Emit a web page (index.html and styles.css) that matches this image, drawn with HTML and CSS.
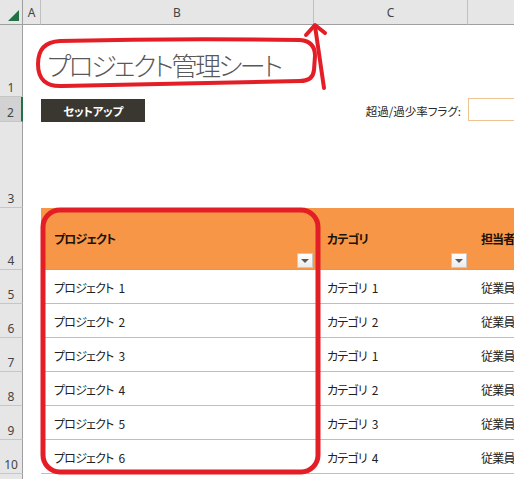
FILE: index.html
```html
<!DOCTYPE html>
<html lang="ja">
<head>
<meta charset="utf-8">
<link rel="stylesheet" href="styles.css">
</head>
<body>
<div class="page">
  <div class="sheet">
    <!-- column headers -->
    <div class="corner"><span class="tri"></span></div>
    <div class="ch">A</div>
    <div class="ch">B</div>
    <div class="ch">C</div>
    <div class="ch ch-last"></div>

    <!-- row 1 -->
    <div class="rh">1</div>
    <div class="c"></div>
    <div class="c title-cell"><span class="title">プロジェクト管理シート</span></div>
    <div class="c"></div>
    <div class="c"></div>

    <!-- row 2 -->
    <div class="rh rh-active">2</div>
    <div class="c"></div>
    <div class="c btn-cell"><span class="btn">セットアップ</span></div>
    <div class="c label-cell">超過/過少率フラグ:</div>
    <div class="c input-cell"><span class="input"></span></div>

    <!-- row 3 -->
    <div class="rh">3</div>
    <div class="c"></div>
    <div class="c"></div>
    <div class="c"></div>
    <div class="c"></div>

    <!-- row 4 header -->
    <div class="rh">4</div>
    <div class="c"></div>
    <div class="c th"><span class="th-text">プロジェクト</span><span class="dd"></span></div>
    <div class="c th"><span class="th-text">カテゴリ</span><span class="dd"></span></div>
    <div class="c th"><span class="th-text">担当者</span></div>

    <div class="rh">5</div><div class="c"></div>
    <div class="c td">プロジェクト 1</div><div class="c td">カテゴリ 1</div><div class="c td">従業員</div>
    <div class="rh">6</div><div class="c"></div>
    <div class="c td">プロジェクト 2</div><div class="c td">カテゴリ 2</div><div class="c td">従業員</div>
    <div class="rh">7</div><div class="c"></div>
    <div class="c td">プロジェクト 3</div><div class="c td">カテゴリ 1</div><div class="c td">従業員</div>
    <div class="rh">8</div><div class="c"></div>
    <div class="c td">プロジェクト 4</div><div class="c td">カテゴリ 2</div><div class="c td">従業員</div>
    <div class="rh">9</div><div class="c"></div>
    <div class="c td">プロジェクト 5</div><div class="c td">カテゴリ 3</div><div class="c td">従業員</div>
    <div class="rh">10</div><div class="c"></div>
    <div class="c td">プロジェクト 6</div><div class="c td">カテゴリ 4</div><div class="c td">従業員</div>

    <div class="rh"></div><div class="c"></div><div class="c"></div><div class="c"></div><div class="c"></div>
  </div>

  <svg class="marks" width="514" height="479" viewBox="0 0 514 479" xmlns="http://www.w3.org/2000/svg">
    <path d="M 60 41 Q 180 38 300 40 Q 315 41 315 56 L 314 70 Q 313 81 300 81 Q 180 84 62 86 Q 38 87 38 64 Q 38 42 60 41 Z" fill="none" stroke="#e41e26" stroke-width="4" stroke-linejoin="round"/>
    <path d="M 324 88 L 315 26" fill="none" stroke="#e41e26" stroke-width="4" stroke-linecap="round"/>
    <path d="M 306 35 L 315 25 L 325 33" fill="none" stroke="#e41e26" stroke-width="4" stroke-linecap="round" stroke-linejoin="round"/>
    <rect x="43" y="210" width="275" height="262" rx="17" ry="17" fill="none" stroke="#e41e26" stroke-width="5"/>
  </svg>
</div>
</body>
</html>
```

FILE: styles.css
```css
html, body {
  margin: 0;
  padding: 0;
  background: #ffffff;
}

.page {
  position: relative;
  width: 514px;
  height: 479px;
  overflow: hidden;
  font-family: "Noto Sans CJK JP", "Noto Sans", sans-serif;
  font-feature-settings: "palt" 1;
}

.sheet {
  display: grid;
  grid-template-columns: 23px 18px 273px 154px 60px;
  grid-template-rows: 25px 72px 25px 86px 62px repeat(6, 34px) 20px;
}

.sheet > div {
  box-sizing: border-box;
  min-width: 0;
}

.corner {
  background: #e6e6e6;
  border-right: 1px solid #9f9f9f;
  border-bottom: 1px solid #9f9f9f;
  position: relative;
}

.tri {
  position: absolute;
  right: 3px;
  bottom: 3px;
  width: 0;
  height: 0;
  border-left: 11px solid transparent;
  border-bottom: 11px solid #217346;
}

.ch {
  background: #e6e6e6;
  border-right: 1px solid #c0c0c0;
  border-bottom: 1px solid #9f9f9f;
  display: flex;
  align-items: center;
  justify-content: center;
  font-family: "Noto Sans", sans-serif;
  font-size: 12px;
  color: #444444;
}

.ch-last {
  border-right: none;
}

.rh {
  background: #e6e6e6;
  border-right: 1px solid #9f9f9f;
  border-bottom: 1px solid #c6c6c6;
  display: flex;
  align-items: flex-end;
  justify-content: center;
  padding-bottom: 1px;
  font-family: "Noto Sans", sans-serif;
  font-size: 12px;
  line-height: 15px;
  color: #444444;
}

.rh-active {
  background: #d2d2d2;
  border-right: 2px solid #217346;
}

.c {
  background: #ffffff;
}

.title-cell {
  display: flex;
  align-items: center;
  padding-left: 6px;
  padding-top: 6px;
  white-space: nowrap;
}

.title {
  font-size: 26px;
  font-weight: 300;
  color: #595959;
  letter-spacing: -2.5px;
}

.btn-cell {
  display: flex;
  align-items: flex-end;
}

.btn {
  display: flex;
  align-items: center;
  justify-content: center;
  width: 104px;
  height: 23px;
  background: #3a3731;
  color: #ffffff;
  font-size: 11.5px;
  font-weight: 700;
  letter-spacing: -0.3px;
}

.label-cell {
  display: flex;
  align-items: center;
  justify-content: flex-end;
  padding-right: 7px;
  padding-top: 2px;
  font-size: 11.5px;
  color: #262626;
  white-space: nowrap;
}

.input-cell {
  padding-top: 1px;
  padding-bottom: 1px;
}

.input {
  display: block;
  height: 100%;
  box-sizing: border-box;
  border: 1px solid #eec394;
  border-right: none;
}

.th {
  background: #f79646;
  border-bottom: 1px solid #a6a6a6;
  display: flex;
  align-items: center;
  justify-content: space-between;
  position: relative;
  padding-left: 13px;
}

.th-text {
  font-size: 12px;
  font-weight: 700;
  color: #1c1208;
  white-space: nowrap;
  letter-spacing: -0.9px;
}

.dd {
  position: absolute;
  right: 1px;
  bottom: 1px;
  width: 16px;
  height: 15px;
  box-sizing: border-box;
  background: linear-gradient(#ffffff, #ececec);
  border: 1px solid #c8c8c8;
  display: flex;
  align-items: center;
  justify-content: center;
}

.dd::after {
  content: "";
  width: 0;
  height: 0;
  border-left: 4px solid transparent;
  border-right: 4px solid transparent;
  border-top: 4px solid #5a5a5a;
}

.td {
  border-bottom: 1px solid #bfbfbf;
  display: flex;
  align-items: center;
  padding-left: 13px;
  padding-top: 1px;
  font-size: 12px;
  color: #222222;
  white-space: nowrap;
  letter-spacing: -0.8px;
  word-spacing: 3px;
}

.marks {
  position: absolute;
  left: 0;
  top: 0;
  pointer-events: none;
}
```
